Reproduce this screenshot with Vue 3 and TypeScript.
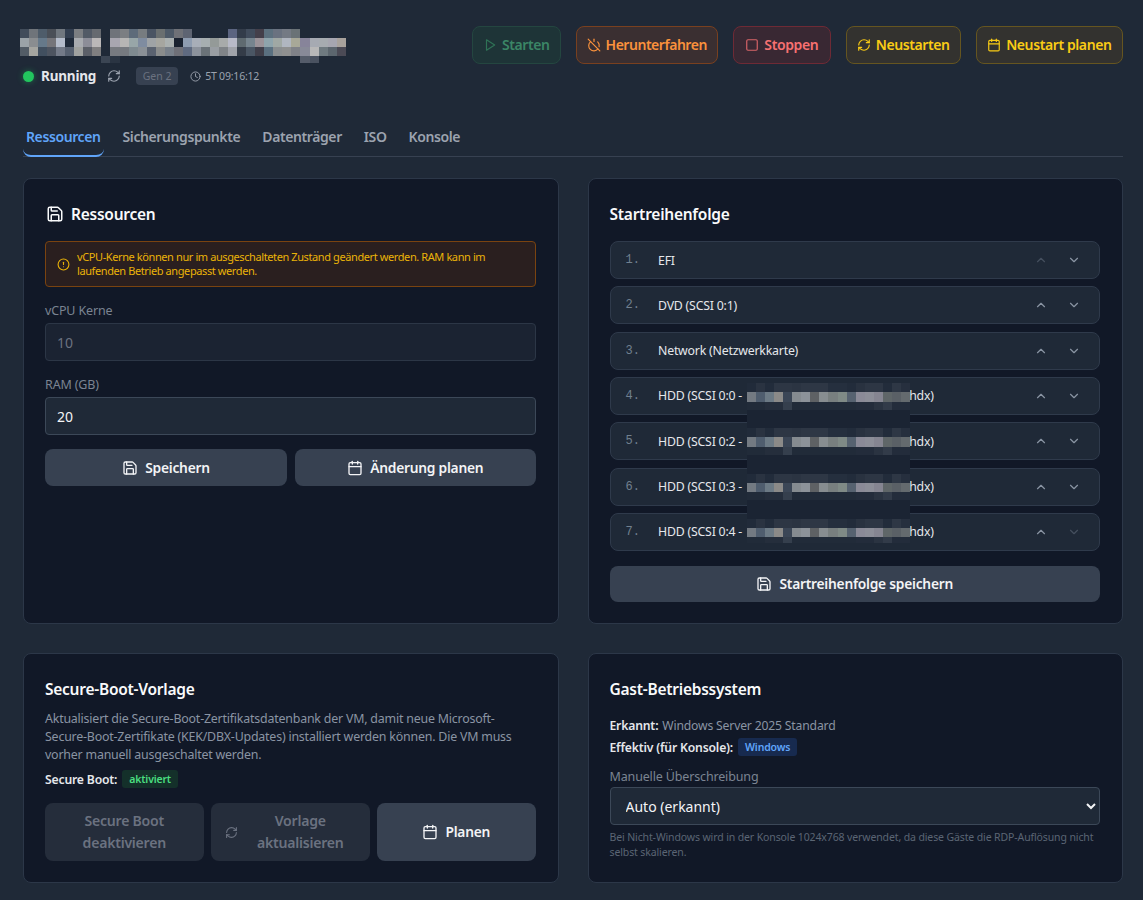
<script setup lang="ts">
const icons: Record<string, string> = {
  save: '<path d="M15.2 3a2 2 0 0 1 1.4.6l3.8 3.8a2 2 0 0 1 .6 1.4V19a2 2 0 0 1-2 2H5a2 2 0 0 1-2-2V5a2 2 0 0 1 2-2z"/><path d="M17 21v-7a1 1 0 0 0-1-1H8a1 1 0 0 0-1 1v7"/><path d="M7 3v4a1 1 0 0 0 1 1h7"/>',
  power: '<path d="M18.36 6.64A9 9 0 0 1 20.77 15"/><path d="M6.16 6.16a9 9 0 1 0 12.68 12.68"/><path d="M12 2v4"/><path d="m2 2 20 20"/>',
  refresh: '<path d="M3 12a9 9 0 0 1 9-9 9.75 9.75 0 0 1 6.74 2.74L21 8"/><path d="M21 3v5h-5"/><path d="M21 12a9 9 0 0 1-9 9 9.75 9.75 0 0 1-6.74-2.74L3 16"/><path d="M8 16H3v5"/>',
  calendar: '<path d="M8 2v4"/><path d="M16 2v4"/><rect width="18" height="18" x="3" y="4" rx="2"/><path d="M3 10h18"/>',
  play: '<polygon points="6 3 20 12 6 21 6 3"/>',
  square: '<rect width="18" height="18" x="3" y="3" rx="2"/>',
  alert: '<circle cx="12" cy="12" r="10"/><line x1="12" x2="12" y1="8" y2="12"/><line x1="12" x2="12.01" y1="16" y2="16"/>',
  clock: '<circle cx="12" cy="12" r="10"/><polyline points="12 6 12 12 16 14"/>',
  up: '<path d="m18 15-6-6-6 6"/>',
  down: '<path d="m6 9 6 6 6-6"/>',
}

const actions = [
  { label: 'Starten', icon: 'play', tone: 'start' },
  { label: 'Herunterfahren', icon: 'power', tone: 'shutdown' },
  { label: 'Stoppen', icon: 'square', tone: 'stop' },
  { label: 'Neustarten', icon: 'refresh', tone: 'warn' },
  { label: 'Neustart planen', icon: 'calendar', tone: 'warn plan' },
]

const tabs = ['Ressourcen', 'Sicherungspunkte', 'Datenträger', 'ISO', 'Konsole']

const bootItems = [
  { name: 'EFI', upOff: true },
  { name: 'DVD (SCSI 0:1)' },
  { name: 'Network (Netzwerkkarte)' },
  { name: 'HDD', head: 'HDD (SCSI 0:0 -', tail: 'hdx)' },
  { name: 'HDD', head: 'HDD (SCSI 0:2 -', tail: 'hdx)' },
  { name: 'HDD', head: 'HDD (SCSI 0:3 -', tail: 'hdx)' },
  { name: 'HDD', head: 'HDD (SCSI 0:4 -', tail: 'hdx)', downOff: true },
]

const B = 'transparent'
const titleMosaic: string[][] = [
  ['#414c5a','#6f747a','#4e5c6a','#4a4f57','#70777f','#323e50','#7b7e82','#525a66','#666a70',B,'#6f737a','#7b7e82','#5d6b7a','#777c80','#4a5463','#6a6f70','#4e5a68','#6f7177','#5e6472',B,B,B,B,'#5b6480','#333c4a','#414c5c','#443f4a','#5c707e','#6a7280','#747a84','#6a7276',B,B,B,B,B],
  ['#9ba3a8','#8a8d90','#66798a','#75757a','#b4bccb','#1f2a3a','#a8abb0','#8c8d98','#bbb8b8',B,'#a8a6b0','#b7b6b5','#98a6a8','#7f8ca0','#9fa3a6','#a6a6a0','#aab0b0','#1a2230','#8e9cb0','#a8aeb8','#a6aeb0','#949a98','#a8abaa','#b8bac8','#5f6a70','#76848e','#9a9298','#8ea4ac','#a0a8a4','#b0b6c0','#a8a898','#87849a','#a6aab2','#a6abb0','#a6a6b0','#a8a29c'],
  ['#525c66','#a5a5a0','#414f5f','#4d5460','#737a88','#566070','#a0a2a0','#5b5f68','#807f80',B,'#777a80','#767a80','#7f8a90','#8a9096','#5a6270','#8a8c8c','#78808a','#6f7078','#5f6a80','#8c929c','#6a7278','#999ea3','#808488','#a0a3aa','#343c48','#4a5664','#403f4a','#5a7080','#8a8e90','#8f9090','#808288','#888a98','#b8b8b8','#6f7a80','#5c666e','#4b4a55'],
  [B,B,B,B,B,B,B,B,B,'#3b4553','#2a3442',B,B,B,B,B,B,B,B,B,B,B,B,B,B,B,B,B,B,B,B,'#555c6a','#4a5260',B,B,B],
]

const main = ['#737a82','#4f5d6e','#6c7a85','#8b8a88','#3b4656','#858b90','#8c9299','#5e6164','#878d90','#787f7f','#7f8a86','#566270','#8a8a97','#8c8e98','#858591','#5f6668','#5a6066','#646a6e']
const top = ['#212b3a','#2a3341','#222c3b','#2d3644','#2d3644','#2b3442','#2e3745','#2e3745','#2e3745','#252f3e','#252f3e','#222c3b','#293240','#2d3644','#2d3644','#222c3b','#2e3745','#262f3e']
const bottom = ['#212b39','#212b39','#252e3c','#252e3c','#353f4d','#212b39','#212b39','#212b39','#212b39','#212b39','#212b39','#212b39','#232c3b','#232c3b','#2a3341','#323b49','#232c3b','#232c3b']
const filler = new Array(18).fill('#1b2433')
const bands: { h: number; cells: string[] }[] = []
for (let i = 0; i < 4; i++) {
  bands.push({ h: 9, cells: top }, { h: 9.5, cells: main }, { h: i === 3 ? 6 : 8, cells: bottom })
  if (i < 3) bands.push({ h: 18.83, cells: filler })
}
</script>

<template>
  <div class="page">
    <header class="head">
      <div class="identity">
        <div class="title-mosaic" role="img" aria-label="Name verdeckt">
          <div v-for="(row, r) in titleMosaic" :key="r" class="tm-row" :class="{ short: r === 3 }">
            <i v-for="(c, k) in row" :key="k" :style="{ background: c }"></i>
          </div>
        </div>
        <div class="status">
          <span class="dot"></span>
          <strong class="running">Running</strong>
          <svg class="ic refresh" viewBox="0 0 24 24" v-html="icons.refresh"></svg>
          <span class="gen">Gen 2</span>
          <span class="uptime"><svg class="ic" viewBox="0 0 24 24" v-html="icons.clock"></svg>5T 09:16:12</span>
        </div>
      </div>
      <div class="actions">
        <button v-for="a in actions" :key="a.label" class="act" :class="a.tone">
          <svg class="ic" viewBox="0 0 24 24" v-html="icons[a.icon]"></svg><span>{{ a.label }}</span>
        </button>
      </div>
    </header>

    <nav class="tabs">
      <span v-for="(t, i) in tabs" :key="t" class="tab" :class="{ active: i === 0 }">{{ t }}</span>
    </nav>

    <main class="grid">
      <section class="card">
        <h2><svg class="ic h-ic" viewBox="0 0 24 24" v-html="icons.save"></svg>Ressourcen</h2>
        <div class="alert">
          <svg class="ic" viewBox="0 0 24 24" v-html="icons.alert"></svg>
          <p>vCPU-Kerne können nur im ausgeschalteten Zustand geändert werden. RAM kann im laufenden Betrieb angepasst werden.</p>
        </div>
        <label class="lbl first">vCPU Kerne</label>
        <input class="field" value="10" disabled />
        <label class="lbl second">RAM (GB)</label>
        <input class="field" value="20" />
        <div class="btn-row">
          <button class="btn"><svg class="ic" viewBox="0 0 24 24" v-html="icons.save"></svg>Speichern</button>
          <button class="btn"><svg class="ic" viewBox="0 0 24 24" v-html="icons.calendar"></svg>Änderung planen</button>
        </div>
      </section>

      <section class="card">
        <h2>Startreihenfolge</h2>
        <div class="boot-list">
          <div v-for="(b, i) in bootItems" :key="i" class="boot">
            <span class="num">{{ i + 1 }}.</span>
            <span class="name">
              <template v-if="b.head">{{ b.head }}<span class="hidden-part"></span>{{ b.tail }}</template>
              <template v-else>{{ b.name }}</template>
            </span>
            <span class="arrows">
              <svg class="ic" :class="{ off: b.upOff }" viewBox="0 0 24 24" v-html="icons.up"></svg>
              <svg class="ic" :class="{ off: b.downOff }" viewBox="0 0 24 24" v-html="icons.down"></svg>
            </span>
          </div>
          <div class="mosaic" aria-hidden="true">
            <div v-for="(band, r) in bands" :key="r" class="m-row" :style="{ height: band.h + 'px' }">
              <i v-for="(c, k) in band.cells" :key="k" :style="{ background: c }"></i>
            </div>
          </div>
        </div>
        <button class="btn wide"><svg class="ic" viewBox="0 0 24 24" v-html="icons.save"></svg>Startreihenfolge speichern</button>
      </section>

      <section class="card">
        <h2>Secure-Boot-Vorlage</h2>
        <p class="desc">Aktualisiert die Secure-Boot-Zertifikatsdatenbank der VM, damit neue Microsoft-<br />Secure-Boot-Zertifikate (KEK/DBX-Updates) installiert werden können. Die VM muss<br />vorher manuell ausgeschaltet werden.</p>
        <div class="kv sb"><b>Secure Boot:</b><span class="badge green">aktiviert</span></div>
        <div class="three">
          <button class="btn dim">Secure Boot deaktivieren</button>
          <button class="btn dim"><svg class="ic small" viewBox="0 0 24 24" v-html="icons.refresh"></svg><span class="grow">Vorlage aktualisieren</span></button>
          <button class="btn"><svg class="ic" viewBox="0 0 24 24" v-html="icons.calendar"></svg>Planen</button>
        </div>
      </section>

      <section class="card">
        <h2>Gast-Betriebssystem</h2>
        <div class="kv detected"><b>Erkannt:</b> <span>Windows Server 2025 Standard</span></div>
        <div class="kv effective"><b>Effektiv (für Konsole):</b><span class="badge blue">Windows</span></div>
        <label class="lbl third">Manuelle Überschreibung</label>
        <select class="field select">
          <option>Auto (erkannt)</option>
        </select>
        <p class="hint">Bei Nicht-Windows wird in der Konsole 1024x768 verwendet, da diese Gäste die RDP-Auflösung nicht selbst skalieren.</p>
      </section>
    </main>
  </div>
</template>

<style>
html, body { background: #1f2937; }
</style>

<style scoped>
.page {
  box-sizing: border-box;
  width: 1143px;
  height: 900px;
  overflow: hidden;
  padding: 26px 20px 0 23px;
  font-family: "Noto Sans", "Open Sans", sans-serif;
  color: #f3f4f6;
}
.ic { width: 16px; height: 16px; fill: none; stroke: currentColor; stroke-width: 2; stroke-linecap: round; stroke-linejoin: round; flex: none; }
.ic.small { width: 13px; height: 13px; }
button { font-family: inherit; cursor: pointer; }

.head { display: flex; justify-content: space-between; margin-left: -3px; height: 78px; }
.identity { padding-top: 3px; }
.title-mosaic { height: 34px; }
.tm-row { display: flex; height: 9px; }
.tm-row.short { height: 7px; }
.tm-row i { width: 9.06px; flex: none; }
.status { display: flex; align-items: center; height: 20px; margin-top: 3px; font-size: 11px; }
.dot { width: 11px; height: 11px; margin-left: 3px; border-radius: 50%; background: #22c55e; box-shadow: 0 0 6px rgba(34, 197, 94, .45); }
.running { margin-left: 7px; font-size: 13.5px; font-weight: 700; letter-spacing: -.2px; color: #e5e7eb; }
.refresh { width: 14px; height: 14px; margin-left: 11px; color: #9ca3af; stroke-width: 2; }
.gen { margin-left: 15px; height: 18px; line-height: 18px; width: 42px; text-align: center; border-radius: 4px; background: #374151; color: #6b7280; font-size: 10.5px; }
.uptime { display: inline-flex; align-items: center; gap: 4px; margin-left: 12px; color: #9ca3af; font-size: 10.5px; letter-spacing: -.2px; }
.uptime .ic { width: 11px; height: 11px; }

.actions { display: flex; gap: 15px; height: 38px; }
.act { display: inline-flex; align-items: center; gap: 5px; height: 38px; padding: 0 10px; border-radius: 8px; border: 1px solid; font-size: 14px; font-weight: 600; letter-spacing: -.4px; background: none; }
.act span { padding-bottom: 2px; }
.act .ic { width: 14px; height: 14px; }
.act.start { background: #1e3437; border-color: #244640; color: #3b8566; }
.act.start .ic { color: #2f7356; }
.act.shutdown { background: #3a2f31; border-color: #79401f; color: #fb923c; letter-spacing: -.47px; }
.act.stop { background: #392833; border-color: #6e2a35; color: #f87171; padding: 0 11.5px; }
.act.stop .ic { color: #d86468; }
.act.warn { background: #33322f; border-color: #655520; color: #facc15; }
.act.plan { padding: 0 10.5px; }

.tabs { display: flex; align-items: flex-end; gap: 16px; height: 39px; margin-top: 13px; border-bottom: 1px solid #374151; }
.tab { padding: 0 3px 7px; font-size: 14px; font-weight: 600; letter-spacing: -.4px; color: #9ca3af; line-height: 22px; border-bottom: 2px solid transparent; border-radius: 0 0 8px 8px; margin-bottom: -1px; }
.tab.active { color: #60a5fa; border-bottom-color: #60a5fa; }

.grid { display: grid; grid-template-columns: 1fr 1fr; grid-template-rows: 446px 230px; gap: 29px 29px; margin-top: 21px; }
.card { background: #111827; border: 1px solid #2c3748; border-radius: 8px; padding: 23px 22px 0 21px; display: flex; flex-direction: column; align-items: stretch; min-width: 0; }
h2 { display: flex; align-items: center; gap: 7px; margin: 0; height: 24px; font-size: 15.5px; font-weight: 600; letter-spacing: -.25px; color: #f9fafb; }
.h-ic { width: 18px; height: 18px; margin-left: 1px; }

.alert { display: flex; align-items: center; gap: 7px; box-sizing: border-box; height: 46px; margin-top: 15px; padding: 0 11px; border: 1px solid #7a4310; border-radius: 4px; background: #2a1f1f; color: #eab308; }
.alert .ic { width: 13px; height: 13px; }
.alert p { margin: 0; font-size: 11px; line-height: 14.5px; letter-spacing: -.4px; color: #eab308; }

.lbl { font-size: 12.5px; line-height: 16px; color: #7b8492; letter-spacing: -.15px; }
.lbl.first { margin-top: 16px; margin-bottom: 4px; }
.lbl.second { margin-top: 16px; margin-bottom: 4px; }
.lbl.third { margin-top: 13px; margin-bottom: 2px; }
.field { box-sizing: border-box; width: 100%; height: 38px; padding: 0 11px; border-radius: 4px; border: 1px solid #3c4858; background: #1f2937; color: #f3f4f6; font-family: inherit; font-size: 14px; outline: none; }
.field:disabled { background: #1b2332; border-color: #2c3646; color: #6b7280; opacity: 1; }
.select { color-scheme: dark; height: 38px; font-size: 14px; }

.btn-row { display: grid; grid-template-columns: 242px 1fr; gap: 8px; margin-top: 14px; }
.btn { display: flex; align-items: center; justify-content: center; gap: 7px; box-sizing: border-box; height: 37px; border: 0; border-radius: 8px; background: #374151; color: #f3f4f6; font-size: 13.8px; font-weight: 600; letter-spacing: -.25px; }
.btn.wide { margin-top: 15px; height: 36px; }

.boot-list { position: relative; display: flex; flex-direction: column; gap: 7.33px; margin-top: 15px; }
.boot { display: flex; align-items: center; box-sizing: border-box; height: 38px; padding: 0 15px; border: 1px solid #2f3a4b; border-radius: 8px; background: #1f2937; }
.num { width: 33px; font-family: "Liberation Mono", monospace; font-size: 12px; color: #71808f; }
.name { flex: 1; font-size: 12.3px; letter-spacing: -.2px; color: #e5e7eb; white-space: nowrap; margin-left: -.5px; }
.hidden-part { display: inline-block; width: 164px; margin-left: 3px; }
.arrows { display: flex; gap: 19px; margin-right: 3px; color: #8a94a3; }
.arrows .ic { width: 14px; height: 14px; stroke-width: 2; }
.arrows .off { color: #454f5e; }
.mosaic { position: absolute; left: 137px; top: 142px; width: 164px; }
.m-row { display: flex; }
.m-row i { flex: 1; }

.desc { margin: 9px 0 0; font-size: 12.4px; line-height: 18px; letter-spacing: -.2px; color: #8a94a3; white-space: nowrap; }
.kv { display: flex; align-items: center; gap: 4px; font-size: 12.2px; letter-spacing: -.18px; color: #8a94a3; }
.kv b { color: #e5e7eb; font-weight: 600; }
.kv.sb { margin-top: 6px; height: 18px; }
.kv.detected { margin-top: 15px; height: 18px; }
.kv.effective { margin-top: 4px; height: 18px; }
.badge { height: 18px; line-height: 18px; padding: 0 7px; border-radius: 3px; font-size: 10.5px; font-weight: 600; margin-left: 1px; }
.badge.green { background: #14302a; color: #4ade80; }
.badge.blue { background: #172a4f; color: #60a5fa; }
.three { display: grid; grid-template-columns: repeat(3, 1fr); gap: 7.5px; margin-top: 15px; }
.three .btn { height: 58px; line-height: 22px; padding: 0 14px; text-align: center; }
.btn.dim { background: #252d3b; color: #6b7280; font-size: 14.1px; }
.grow { flex: 1; }
.hint { margin: 5px 0 0; font-size: 10.5px; line-height: 15px; letter-spacing: -.12px; color: #5b6574; }
</style>
